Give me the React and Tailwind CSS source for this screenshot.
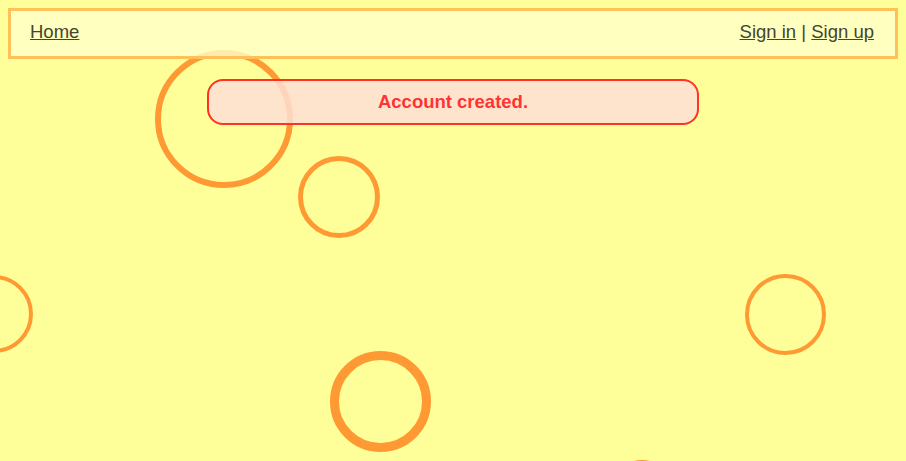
import React from 'react'

const bubbles = [
  { pos: 'left-[155px] top-[50px] w-[138px] h-[138px] border-[6px]' },
  { pos: 'left-[298px] top-[156px] w-[82px] h-[82px] border-[5px]' },
  { pos: 'left-[-45px] top-[275px] w-[78px] h-[78px] border-[4px]' },
  { pos: 'left-[745px] top-[274px] w-[81px] h-[81px] border-[4px]' },
  { pos: 'left-[330px] top-[351px] w-[101px] h-[101px] border-[9px]' },
  { pos: 'left-[612px] top-[460px] w-[60px] h-[60px] border-[4px]' },
]

export default function App() {
  return (
    <div className="relative h-screen w-full overflow-hidden bg-[#ffff99] font-['Liberation_Sans',Arial,sans-serif]">
      {/* floating bubbles */}
      {bubbles.map((b, i) => (
        <div key={i} className={`absolute rounded-full border-[#ff9933] ${b.pos}`} />
      ))}

      <div className="relative z-10 p-2">
        <nav className="flex items-center justify-between border-[3px] border-[#ffc05a] bg-[rgba(255,255,200,0.8)] pl-[19px] pr-[21px] pt-[10px] pb-[14px] text-[18.5px] leading-[21px] text-[#45452f]">
          <a href="#" className="underline">Home</a>
          <div>
            <a href="#" className="underline">Sign in</a>
            <span> | </span>
            <a href="#" className="underline">Sign up</a>
          </div>
        </nav>

        <div className="mx-auto mt-5 flex h-[46px] w-[492px] items-center justify-center rounded-[16px] border-2 border-[#ff3322] bg-[rgba(255,223,214,0.84)] text-[18.5px] font-bold text-[#ff3333]">
          Account created.
        </div>
      </div>
    </div>
  )
}
